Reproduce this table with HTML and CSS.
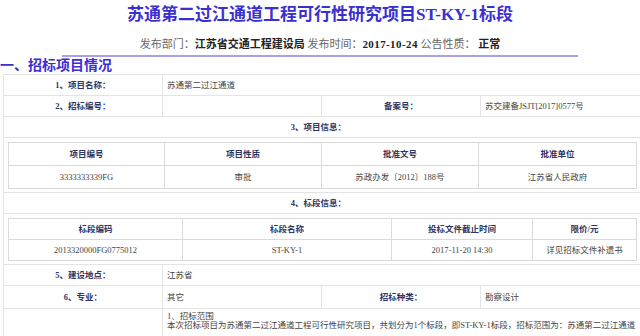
FILE: index.html
```html
<!DOCTYPE html>
<html lang="zh-CN">
<head>
<meta charset="utf-8">
<title>苏通第二过江通道工程可行性研究项目ST-KY-1标段</title>
<link rel="stylesheet" href="styles.css">
</head>
<body>
<h1 class="title">苏通第二过江通道工程可行性研究项目ST-KY-1标段</h1>
<div class="meta">发布部门：<b>江苏省交通工程建设局</b> 发布时间：<b class="date">2017-10-24</b> 公告性质： <b>正常</b></div>
<h2 class="section">一、招标项目情况</h2>
<table class="info">
  <colgroup><col class="c1"><col class="c2"><col class="c3"><col class="c4"></colgroup>
  <tr class="r21">
    <td class="label">1、项目名称：</td>
    <td class="value" colspan="3">苏通第二过江通道</td>
  </tr>
  <tr class="r21">
    <td class="label">2、招标编号：</td>
    <td class="value">&nbsp;</td>
    <td class="label">备案号：</td>
    <td class="value">苏交建备JSJT[2017]0577号</td>
  </tr>
  <tr class="r21">
    <td class="label caption" colspan="4">3、项目信息：</td>
  </tr>
  <tr>
    <td class="holder" colspan="4">
      <table class="sub sub1">
        <colgroup><col class="p1"><col class="p2"><col class="p3"><col class="p4"></colgroup>
        <tr><th>项目编号</th><th>项目性质</th><th>批准文号</th><th>批准单位</th></tr>
        <tr><td>3333333339FG</td><td>审批</td><td>苏政办发〔2012〕188号</td><td>江苏省人民政府</td></tr>
      </table>
    </td>
  </tr>
  <tr class="r21">
    <td class="label caption" colspan="4">4、标段信息：</td>
  </tr>
  <tr>
    <td class="holder" colspan="4">
      <table class="sub sub2">
        <colgroup><col class="b1"><col class="b2"><col class="b3"><col class="b4"></colgroup>
        <tr><th>标段编码</th><th>标段名称</th><th>投标文件截止时间</th><th>限价/元</th></tr>
        <tr><td>2013320000FG0775012</td><td>ST-KY-1</td><td>2017-11-20 14:30</td><td>详见招标文件补遗书</td></tr>
      </table>
    </td>
  </tr>
  <tr class="r21">
    <td class="label">5、建设地点：</td>
    <td class="value" colspan="3">江苏省</td>
  </tr>
  <tr class="r23">
    <td class="label">6、专业：</td>
    <td class="value">其它</td>
    <td class="label">招标种类：</td>
    <td class="value">勘察设计</td>
  </tr>
  <tr>
    <td class="label">&nbsp;</td>
    <td class="value scope" colspan="3">
      <div class="line">1、招标范围</div>
      <div class="line">本次招标项目为苏通第二过江通道工程可行性研究项目，共划分为1个标段，即ST-KY-1标段，招标范围为：苏通第二过江通道（</div>
    </td>
  </tr>
</table>
</body>
</html>
```
FILE: styles.css
```css
html, body {
  margin: 0;
  padding: 0;
  overflow: hidden;
  background: #ffffff;
}
body {
  width: 640px;
  font-family: "Liberation Serif", "Noto Sans CJK SC", serif;
}
.title {
  margin: 5px 0 0;
  text-align: center;
  font-size: 17px;
  line-height: 20px;
  font-weight: bold;
  color: #3b2fd2;
}
.meta {
  width: 516px;
  margin: 12px auto 0;
  padding-bottom: 4px;
  border-bottom: 2px solid #aaa0e8;
  text-align: center;
  font-size: 11px;
  line-height: 14px;
  color: #666666;
}
.meta b {
  color: #222222;
}
.meta .date {
  letter-spacing: 0.4px;
}
.section {
  margin: 0;
  padding-top: 1px;
  font-size: 14px;
  line-height: 16px;
  font-weight: bold;
  color: #3b2fd2;
}
.info {
  margin-left: 3px;
  width: 640px;
  border-collapse: collapse;
  table-layout: fixed;
  font-size: 8.5px;
  color: #444444;
}
.info .c1, .info .c2, .info .c3 { width: 159px; }
.info .c4 { width: 163px; }
.info > tbody > tr > td {
  border: 1px solid #e4e4e4;
  padding: 0 4px;
  line-height: 20px;
  white-space: nowrap;
  overflow: hidden;
}
.info > tbody > tr.r23 > td { line-height: 22px; }
.info .label {
  text-align: center;
  font-weight: bold;
  color: #2d3563;
}
.info .caption {
  padding-right: 14px;
}
.info .value {
  text-align: left;
}
.info > tbody > tr > td.holder {
  padding: 4px 0 3px 4px;
  line-height: normal;
}
.sub {
  width: 628px;
  border-collapse: collapse;
  table-layout: fixed;
}
.sub th, .sub td {
  border: 1px solid #dadada;
  text-align: center;
  padding: 0;
  white-space: nowrap;
}
.sub th {
  font-weight: bold;
  color: #2d3563;
}
.sub td {
  color: #444444;
}
.sub1 th, .sub1 td { line-height: 22px; }
.sub2 th, .sub2 td { line-height: 20px; }
.sub1 .p1 { width: 156px; }
.sub1 .p2 { width: 157px; }
.sub1 .p3 { width: 157px; }
.sub1 .p4 { width: 158px; }
.sub2 .b1 { width: 174px; }
.sub2 .b2 { width: 209px; }
.sub2 .b3 { width: 141px; }
.sub2 .b4 { width: 104px; }
.info > tbody > tr > td.scope {
  padding-top: 3px;
  padding-bottom: 6px;
  line-height: 9px;
  vertical-align: top;
}
.scope .line {
  white-space: nowrap;
}
```
